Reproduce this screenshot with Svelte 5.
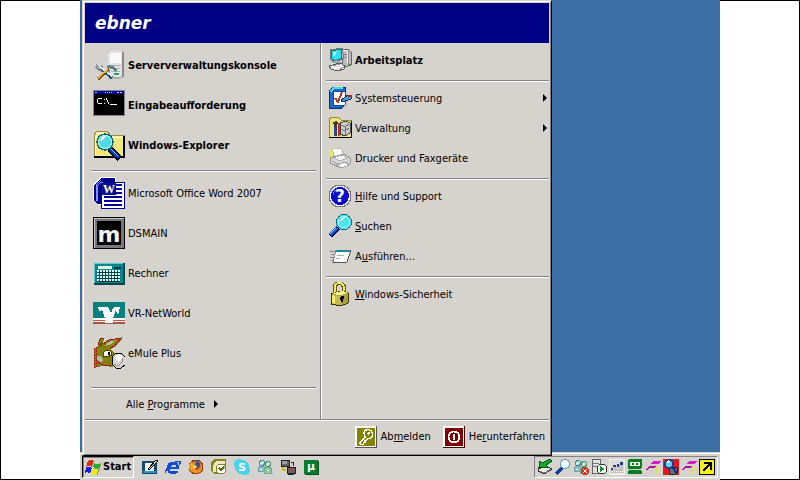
<script lang="ts">
    type Entry = { icon: string; label: string; key?: number; sub?: boolean };

    const pinned: Entry[] = [
        { icon: 'server', label: 'Serververwaltungskonsole' },
        { icon: 'cmd', label: 'Eingabeaufforderung' },
        { icon: 'explorer', label: 'Windows-Explorer' },
    ];

    const recent: Entry[] = [
        { icon: 'word', label: 'Microsoft Office Word 2007' },
        { icon: 'dsmain', label: 'DSMAIN' },
        { icon: 'calc', label: 'Rechner' },
        { icon: 'vr', label: 'VR-NetWorld' },
        { icon: 'emule', label: 'eMule Plus' },
    ];

    // key = index of the underlined letter
    const places: Entry[][] = [
        [{ icon: 'computer', label: 'Arbeitsplatz' }],
        [
            { icon: 'control', label: 'Systemsteuerung', key: 1, sub: true },
            { icon: 'admin', label: 'Verwaltung', sub: true },
            { icon: 'printer', label: 'Drucker und Faxgeräte' },
        ],
        [
            { icon: 'help', label: 'Hilfe und Support', key: 0 },
            { icon: 'search', label: 'Suchen', key: 0 },
            { icon: 'run', label: 'Ausführen...', key: 1 },
        ],
        [{ icon: 'lock', label: 'Windows-Sicherheit', key: 0 }],
    ];

    const quick = [
        ['desktop', 'Desktop anzeigen'],
        ['ie', 'Internet Explorer'],
        ['firefox', 'Firefox'],
        ['outlook', 'Outlook'],
        ['skype', 'Skype'],
        ['messenger', 'Messenger'],
        ['remote', 'Remotedesktop'],
        ['utorrent', 'µTorrent'],
    ];

    const tray = [
        ['eject', 'Hardware entfernen'],
        ['magnifier', 'Suche'],
        ['offline', 'Messenger offline'],
        ['service', 'Dienste'],
        ['monitor', 'Monitor'],
        ['robot', 'RoboForm'],
        ['unknown', 'Verbindung 1'],
        ['scan', 'Scanner'],
        ['unknown', 'Verbindung 2'],
        ['arrow', 'Fernsteuerung'],
    ];

    let open = $state(true);
</script>

{#snippet text(label: string, key?: number)}
    {#if key === undefined}
        <span>{label}</span>
    {:else}
        <span>{label.slice(0, key)}<u>{label[key]}</u>{label.slice(key + 1)}</span>
    {/if}
{/snippet}

{#snippet lens()}
    <path d="M17 20l10 10" stroke="#000" stroke-width="6" />
    <path d="M17 20l9 9" stroke="#0a2fd0" stroke-width="4" />
    <path d="M17 19l8 8" stroke="#8cd8f8" stroke-width="1" />
    <circle cx="12" cy="13" r="8" fill="#4fd8e8" stroke="#08647c" stroke-width="1.5" />
    <circle cx="12" cy="13" r="6.5" fill="none" stroke="#a8f4fa" />
    <path d="M7 12q1-5 6-5l-3 4z" fill="#fff" />
{/snippet}

{#snippet people()}
    <circle cx="5" cy="4" r="2.5" fill="#b9dce4" stroke="#4b8794" />
    <path d="M1 12q0-5 4-5t4 5z" fill="#86bfce" stroke="#6fa5b2" />
    <circle cx="11" cy="5" r="2.5" fill="#b9e0c6" stroke="#4f9172" />
    <path d="M7 14q0-6 4-6t4 6z" fill="#8cc9a4" stroke="#6fae8c" />
    <path d="M3 4h2M10 5h1M3 10h2M10 11h2" stroke="#fff" />
{/snippet}

{#snippet icon32(name: string)}
    <svg class="icon" viewBox="0 0 32 32" fill="none" aria-hidden="true">
        {#if name === 'server'}
            <path d="M15 5l4-3h11v25l-4 3H15z" fill="#adadad" />
            <path d="M15 5l4-3h10v24l-3 3H15z" fill="#e4e4e2" />
            <path d="M17 4h11v10H17z" fill="#fafafa" />
            <path d="M29 3v25h2V3z" fill="#8c8c8c" />
            <path d="M17 16h11M18 19h9M18 22h9M18 28h12" stroke="#a8b0b0" />
            <path d="M21 25h5" stroke="#28a05a" stroke-width="2" />
            <path d="M3 17l4 4 10 3" stroke="#a0a4a6" stroke-width="3" />
            <path d="M3 15v4l4 2 3-2-2-3" stroke="#888" />
            <path d="M7 19l12 10" stroke="#214f70" stroke-width="3" />
            <path d="M7 18l12 9" stroke="#def" stroke-width="2" />
            <path d="M15 16l6 1 3 4-2 2-3-3-5-1z" fill="#5f8189" />
            <path d="M16 20L5 30" stroke="#7c4b12" stroke-width="3" />
            <path d="M15 20L5 29" stroke="#e8b04c" stroke-width="2" />
        {:else if name === 'cmd'}
            <path d="M0 1h32v26H0z" fill="#848484" />
            <path d="M1 2h30v24H1z" fill="#000" />
            <path d="M1 2h30v3H1z" fill="#0000a0" />
            <path d="M2 3h2v1H2zM12 3h1v1h-1zM14 3h1v1h-1zM16 3h1v1h-1zM18 3h1v1h-1zM24 3h2v1h-2zM27 3h2v1h-2z" fill="#c8d0ff" />
            <path d="M5 9h4v1H5zM4 10h1v4H4zM5 14h4v1H5zM11 10h1v1h-1zM11 14h1v1h-1zM13 9h1v2h-1zM14 11h1v2h-1zM15 13h1v2h-1zM17 15h7v1h-7z" fill="#fff" />
        {:else if name === 'explorer'}
            <path d="M1 27V6l3-4h10l3 4h14v21z" fill="#f7ef94" stroke="#9c8c40" />
            <path d="M2 8h28v18H2z" fill="#efe878" />
            <path d="M2 8h28M2 8v18M4 4h9" stroke="#fffbd0" />
            <path d="M1 28h30V7" stroke="#000" stroke-width="2" />
            {@render lens()}
        {:else if name === 'word'}
            <path d="M7 0h16v5H11v23H4l-4-4V8z" fill="#fff" />
            <path d="M8 1h14v4H10v22H4l-3-3V8z" fill="#00008c" />
            <path d="M8 3L3 8v15h1V9l4-4h8" stroke="#8890ff" />
            <path d="M10 5h21v26H8V13h2z" fill="#fff" stroke="#0000a0" />
            <path d="M9 6h14v12H9z" fill="#10108c" />
            <text x="10" y="16" font-family="Liberation Serif, serif" font-size="12" font-weight="bold" fill="#fff">W</text>
            <path d="M23 8h6M23 12h6M23 16h6M11 20h18M11 24h18M11 28h18" stroke="#0000a0" stroke-width="2" />
        {:else if name === 'dsmain'}
            <path d="M0 0h32v32H0z" fill="#000" />
            <path d="M1 1h30v30H1z" fill="#787878" />
            <path d="M1 31V1h30v1H2v29z" fill="#c6c6c6" />
            <path d="M4 4h24v24H4z" fill="#000" />
            <text x="16" y="25" text-anchor="middle" font-family="DejaVu Sans, sans-serif" font-size="22" font-weight="bold" fill="#f4f4f4">m</text>
        {:else if name === 'calc'}
            <path d="M1 6h31v22H1z" fill="#004448" />
            <path d="M1 6h29v20H1z" fill="#63cbd0" />
            <path d="M2 7h28v19H2z" fill="#008890" />
            <path d="M5 9h14v3H5z" fill="#e8f4d8" />
            <path d="M21 11h7M5 15h22M5 18h22M5 21h22M5 24h22" stroke="#003c44" stroke-width="2" />
            <path d="M4 14h23M4 17h23M4 20h23M4 23h23" stroke="#e8ffff" stroke-width="2" stroke-dasharray="2 1" />
        {:else if name === 'vr'}
            <path d="M0 5h32v16H0z" fill="#088080" />
            <path d="M0 21h32v2H0z" fill="#fff" />
            <path d="M0 23h32v1H0z" fill="#e04848" />
            <path d="M0 24h32v1H0z" fill="#fff" />
            <path d="M0 25h32v2H0z" fill="#9b5b3c" />
            <path d="M5 10h10l3 6 2-5 2-1h5l-1 5-2 2-1-4-3 9v4h-8v-5l-3-8-3 1z" fill="#fff" />
        {:else if name === 'emule'}
            <path d="M1 31V13l4-5 1-5 4-2 1 1-1 5 6-4 12-2 1 1-6 7-5 3 4 5 1 12-6 1-4-2-8 2z" fill="#848008" />
            <path d="M5 8l2-6 4-1M10 7l6-4 12-2-6 8-5 2" stroke="#a01818" />
            <path d="M7 10l2-5M12 9l5-4" stroke="#565400" stroke-width="2" />
            <path d="M13 7l5-3 5-1-5 4-6 2z" fill="#c0bcae" />
            <path d="M1 11v20M3 10v20" stroke="#a01818" stroke-dasharray="2 1" />
            <path d="M4 19q5-1 6 4-3 4-6 0z" fill="#bab7ad" />
            <path d="M11 15q4-4 7 0l1 3-5 2-4-1z" fill="#fff" stroke="#4a4208" />
            <path d="M15 15h2v3h-2z" fill="#000" />
            <path d="M19 20l4-4h5l4 4v8l-4 3h-5l-4-4z" fill="#d8d4d4" stroke="#000" />
            <path d="M22 19l4-2 4 2-2 4-3 2z" fill="#fff" />
            <path d="M21 27l4 2 4-4 1-4" stroke="#8c888c" />
            <path d="M5 24q3 6 13 4" stroke="#a01818" />
        {/if}
    </svg>
{/snippet}

{#snippet icon24(name: string)}
    <svg class="icon" viewBox="0 0 24 24" fill="none" aria-hidden="true">
        {#if name === 'computer'}
            <path d="M14 1l7 1 2 2v13l-6 2-3-2z" fill="#bdbdbd" stroke="#666" />
            <path d="M20 3v14M16 6h5M16 9h5" stroke="#888" />
            <path d="M15 2l4 1v12" stroke="#fff" />
            <path d="M2 2l12-2 2 10-9 5-5-4z" fill="#ccc" stroke="#777" />
            <path d="M3 3l10-2 1 9-7 3-3-2z" fill="#31dff0" stroke="#0b7888" />
            <path d="M5 5l4-2-3 6z" fill="#bdf8fc" />
            <path d="M7 14l5-1 3 4-4 1z" fill="#aaa" />
            <path d="M1 18l11-3 5 3-1 3-7 2-6-2z" fill="#e8e8e8" stroke="#555" />
            <path d="M4 18l8-2M12 21l4-2" stroke="#999" />
            <path d="M21 16h2" stroke="#1cba38" />
        {:else if name === 'control'}
            <path d="M1 5l4-4h12v18l-3 3-13 1z" fill="#1f68c8" stroke="#063275" />
            <path d="M2 6l4-4h9" stroke="#4cd8f0" stroke-width="2" />
            <path d="M5 5h10l2 1v13L5 20z" fill="#fff" stroke="#0a4ca8" />
            <path d="M7 12l3 4 4-10" stroke="#b43820" stroke-width="2" />
            <path d="M13 14l7-5 4 1-1 3-9 3z" fill="#4c9cd8" stroke="#102e68" />
            <path d="M20 10h4" stroke="#c02020" stroke-width="2" />
        {:else if name === 'admin'}
            <path d="M1 21V4l2-3h7l3 3h10v17z" fill="#eee47c" stroke="#948634" />
            <path d="M1 21h22V5" stroke="#000" />
            <path d="M5 6l3-1 3 2-2 1v12H6V9z" fill="#374040" />
            <path d="M7 11v9" stroke="#2048c0" stroke-width="2" />
            <path d="M11 7v13" stroke="#c82828" stroke-width="2" />
            <path d="M12 7l6-2 4 2v10l-5 3-5-2z" fill="#c9c9c9" stroke="#444" />
            <path d="M13 9l4 2 4-3M13 13l4 2 4-3M17 11v8" stroke="#777" />
        {:else if name === 'printer'}
            <path d="M1 4l5-3 6 1-1 9-8 4-2-1z" fill="#eee36b" />
            <path d="M4 2h9l4 9-10 2z" fill="#fff" stroke="#bbb" />
            <path d="M2 12l14-4 6 4v6l-9 4-11-5z" fill="#d6d6d6" stroke="#959595" />
            <path d="M5 12l9-3 5 3-7 3z" fill="#f4f4f4" stroke="#b0b0b0" />
            <path d="M4 15l8 4 8-3M8 19l9-3 4 3-7 3z" stroke="#a4a4a4" />
            <path d="M10 19l7-2 3 2-6 2z" fill="#fff" />
        {:else if name === 'help'}
            <circle cx="12" cy="12" r="11" fill="#f4f4ff" stroke="#777" />
            <circle cx="12" cy="12" r="9" fill="#0a0ac8" />
            <path d="M5 11a7 7 0 0 1 5-6" stroke="#5c70ff" />
            <text x="12" y="18" text-anchor="middle" font-family="DejaVu Sans, sans-serif" font-size="17" font-weight="bold" fill="#fff">?</text>
        {:else if name === 'search'}
            <path d="M10 14l-8 8" stroke="#001050" stroke-width="5" />
            <path d="M9 14l-7 7" stroke="#1850e0" stroke-width="3" />
            <path d="M8 14l-6 6" stroke="#a4e0ff" />
            <circle cx="16" cy="8" r="7.5" fill="#4ce4f0" stroke="#08748a" />
            <circle cx="16" cy="8" r="6" stroke="#9ef4f8" />
            <path d="M12 7q1-4 5-4l-2 3z" fill="#fff" />
        {:else if name === 'run'}
            <path d="M2 7h6M3 10h5M2 13h5M3 16h3" stroke="#888" />
            <path d="M8 6h15l-4 12H5z" fill="#fafafa" stroke="#888" />
            <path d="M8 7h15" stroke="#168c9c" stroke-width="2" />
            <path d="M5 18h14l4-12" stroke="#555" />
            <path d="M9 11h7M8 14h4" stroke="#aaa" />
        {:else if name === 'lock'}
            <path d="M7 11V5q0-4 4-4t5 4v5" stroke="#5c5600" stroke-width="4" />
            <path d="M7 11V5q0-4 4-4t5 4v5" stroke="#f1ec63" stroke-width="2" />
            <path d="M3 12l11-3 6 2v10l-7 3-10-2z" fill="#aaa03c" stroke="#3b3500" />
            <path d="M3 12l10 1 7-2-6-2z" fill="#f8f389" />
            <path d="M4 13l9 1v9l-9-2z" fill="#c4bc50" />
            <path d="M4 13l3 1v8l-3-1z" fill="#f4ef70" />
            <path d="M14 15l5-2v8l-5 2z" fill="#a89f48" />
            <path d="M14 14v6" stroke="#000" stroke-width="2" />
            <circle cx="14" cy="16" r="2" fill="#000" />
        {:else if name === 'logoff'}
            <path d="M0 0h24v24H0z" fill="#555" />
            <path d="M0 0h23v23H0z" fill="#fff" />
            <path d="M2 2h20v20H2z" fill="#848400" />
            <path d="M11 12l-6 6 1 2h3v-2h2v-2l3-2q5 0 5-5t-5-5-4 5z" stroke="#fff" stroke-width="1.5" />
            <circle cx="15" cy="8" r="1.5" fill="#fff" />
        {:else if name === 'shutdown'}
            <path d="M0 0h24v24H0z" fill="#400" />
            <path d="M0 0h23v23H0z" fill="#fff" />
            <path d="M2 2h20v20H2z" fill="#840000" />
            <circle cx="12" cy="12" r="6" stroke="#fff" stroke-width="2" />
            <path d="M12 9v6" stroke="#fff" stroke-width="2" />
        {/if}
    </svg>
{/snippet}

{#snippet icon16(name: string)}
    <svg class="icon" viewBox="0 0 16 16" fill="none" aria-hidden="true">
        {#if name === 'flag'}
            <path d="M3 2q3-2 6 0L7 8Q4 6 1 7z" fill="#e22810" />
            <path d="M9 4q3 2 7 0l-2 5q-3 2-6-1z" fill="#1db02c" />
            <path d="M1 8q3-1 6 1l-2 6q-2-3-5-1z" fill="#1020e0" />
            <path d="M8 9q3 3 6 1l-2 5q-3 2-6-1z" fill="#f2e800" />
            <path d="M16 5l-4 11" stroke="#8a9a38" />
        {:else if name === 'desktop'}
            <path d="M0 2h15v13H0z" fill="#16486e" />
            <path d="M3 4h9v8H3z" fill="#f0fbff" />
            <path d="M1 13h13" stroke="#2898c8" stroke-width="2" />
            <path d="M6 10l8-9 2 1-8 8-2 1z" fill="#f4d46c" stroke="#000" />
        {:else if name === 'ie'}
            <circle cx="8" cy="9" r="5" stroke="#124cd4" stroke-width="3" />
            <path d="M4 9h9" stroke="#124cd4" stroke-width="2" />
            <path d="M10 11h5" stroke="#d6d3ce" stroke-width="2" />
            <path d="M1 14q-2-2 4-7 7-6 10-4 1 1-1 3" stroke="#124cd4" stroke-width="1.5" />
        {:else if name === 'firefox'}
            <circle cx="8" cy="8" r="7" fill="#e37418" stroke="#94380b" />
            <circle cx="8" cy="6" r="4" fill="#2854a8" />
            <path d="M2 3l3 1 3-2-1 4 3 2-4 2 3 2 4-2 1-5q2 8-6 9-7-1-7-6z" fill="#f09a24" />
            <path d="M3 5l2 2 3 1-3 2" stroke="#ffdc68" />
        {:else if name === 'outlook'}
            <path d="M3 0h12v5l-2 10H3l-3-3V4z" fill="#858420" />
            <path d="M4 2h10v3H7L5 8v5H2V5z" fill="#f0e8b8" />
            <path d="M1 6l4-5" stroke="#858420" stroke-width="2" />
            <circle cx="10" cy="10" r="5" fill="#fff" stroke="#858420" />
            <path d="M8 9l2 2 3-3" stroke="#646418" stroke-width="1.5" />
        {:else if name === 'skype'}
            <circle cx="5" cy="5" r="5" fill="#48d4ef" />
            <circle cx="11" cy="11" r="5" fill="#48d4ef" />
            <circle cx="8" cy="8" r="7" fill="#48d4ef" />
            <text x="8" y="12" text-anchor="middle" font-family="DejaVu Sans, sans-serif" font-size="11" font-weight="bold" fill="#fff">S</text>
        {:else if name === 'messenger'}
            {@render people()}
        {:else if name === 'remote'}
            <path d="M1 1h8v6H1zM7 8h8v6H7z" fill="#60666c" stroke="#222" />
            <path d="M2 2h5v3H2z" fill="#9d9da5" />
            <path d="M9 9h4v3H9z" fill="#a44a3c" />
            <path d="M3 8v3h3" stroke="#d8b800" stroke-width="2" />
            <path d="M11 3h2v4M8 15h6" stroke="#222" />
        {:else if name === 'utorrent'}
            <path d="M1 1h14v14H1z" fill="#087c30" />
            <path d="M15 2v13H2" stroke="#004c18" />
            <text x="8" y="11" text-anchor="middle" font-family="DejaVu Sans, sans-serif" font-size="11" font-weight="bold" fill="#fff">µ</text>
        {:else if name === 'eject'}
            <path d="M1 10l8-3 6 3-8 5-6-3z" fill="#ececec" stroke="#333" />
            <path d="M3 12l4 2 7-4" stroke="#888" />
            <path d="M13 0l2 2-6 4 2 2H2l1-6 2 2z" fill="#18a830" stroke="#045c12" />
        {:else if name === 'magnifier'}
            <path d="M7 9l-6 6" stroke="#124090" stroke-width="3" />
            <circle cx="10" cy="5" r="4.5" fill="#e8fcff" stroke="#6a9ab0" />
            <path d="M8 3h3" stroke="#fff" stroke-width="2" />
        {:else if name === 'offline'}
            {@render people()}
            <circle cx="12" cy="12" r="4" fill="#d4341c" />
            <path d="M10 10l4 4M14 10l-4 4" stroke="#fff" />
        {:else if name === 'service'}
            <path d="M1 1l2-1h6v14H1z" fill="#e0e0e0" stroke="#666" />
            <path d="M2 4h6M2 7h6" stroke="#777" />
            <circle cx="11" cy="10" r="5" fill="#fff" stroke="#333" />
            <path d="M9 7l5 3-5 3z" fill="#0c9428" />
        {:else if name === 'monitor'}
            <path d="M0 0h16v16H0z" fill="#f4f2f0" />
            <path d="M1 1h14v14H1z" fill="#dedcd8" />
            <path d="M2 14v-3h3V8h3v2h2V6h4v8z" fill="#c0bfbb" />
            <path d="M2 9h2v2H2zM4 6h3v2H4zM8 5h2v3H8zM11 3h3v3h-3z" fill="#203c9c" />
            <path d="M3 12h11M3 14h11" stroke="#fff" stroke-dasharray="1 1" />
        {:else if name === 'robot'}
            <rect x="1" y="0" width="14" height="10" rx="2" fill="#087c20" />
            <path d="M3 3h10v4H3z" fill="#e8fbe8" />
            <path d="M5 4h2v2H5zM9 4h2v2H9z" fill="#087c20" />
            <path d="M1 15v-3l2-1h10l2 1v3z" fill="#087c20" />
        {:else if name === 'unknown'}
            <path d="M5 5l3-3h8l-3 3z" fill="#d818d0" />
            <path d="M0 11l4-4h8l-3 2H5l-3 2z" fill="#b00ca8" />
            <text x="12" y="15" text-anchor="middle" font-family="DejaVu Sans, sans-serif" font-size="9" font-weight="bold" fill="#eee428">?</text>
        {:else if name === 'scan'}
            <path d="M0 0h16v16H0z" fill="#e41820" />
            <path d="M6 8h8v6l-2 1H6z" fill="#606a78" stroke="#222" />
            <circle cx="6" cy="5" r="4" fill="#64d2ec" stroke="#113c98" stroke-width="2" />
            <path d="M9 8l5 6" stroke="#102c80" stroke-width="2" />
            <path d="M4 4l2-2" stroke="#fff" stroke-width="1.5" />
        {:else if name === 'arrow'}
            <path d="M0 0h16v16H0z" fill="#000" />
            <path d="M1 1h14v14H1z" fill="#f8ee18" />
            <path d="M4 12l7-7M5 4h7v7" stroke="#000" stroke-width="2" />
        {/if}
    </svg>
{/snippet}

{#snippet entry(e: Entry, bold: boolean)}
    <li>
        <button class="entry" class:bold>
            {#if pinned.includes(e) || recent.includes(e)}
                {@render icon32(e.icon)}
            {:else}
                {@render icon24(e.icon)}
            {/if}
            {@render text(e.label, e.key)}
            {#if e.sub}
                <i class="caret"></i>
            {/if}
        </button>
    </li>
{/snippet}

<div class="page">
    <main class="desktop">
        {#if open}
            <nav class="menu" aria-label="Startmenü">
                <h1>ebner</h1>
                <div class="columns">
                    <div class="programs">
                        <ul>
                            {#each pinned as e}{@render entry(e, true)}{/each}
                        </ul>
                        <hr />
                        <ul>
                            {#each recent as e}{@render entry(e, false)}{/each}
                        </ul>
                        <hr class="last" />
                        <button class="all">
                            {@render text('Alle Programme', 5)}
                            <i class="caret"></i>
                        </button>
                    </div>
                    <div class="places">
                        {#each places as group, i}
                            {#if i > 0}<hr />{/if}
                            <ul>
                                {#each group as e}{@render entry(e, i === 0)}{/each}
                            </ul>
                        {/each}
                    </div>
                </div>
                <footer>
                    <button class="session">{@render icon24('logoff')}{@render text('Abmelden', 2)}</button>
                    <button class="session">{@render icon24('shutdown')}{@render text('Herunterfahren', 2)}</button>
                </footer>
            </nav>
        {/if}

        <div class="taskbar">
            <button class="start" class:pressed={open} onclick={() => (open = !open)}>
                {@render icon16('flag')}
                <span>Start</span>
            </button>
            <div class="quick">
                {#each quick as [name, label]}
                    <button aria-label={label}>{@render icon16(name)}</button>
                {/each}
            </div>
            <div class="tray">
                {#each tray as [name, label]}
                    <button aria-label={label}>{@render icon16(name)}</button>
                {/each}
            </div>
        </div>
    </main>
</div>

<style>
    :global(body) {
        background: #fff;
    }

    .page {
        min-height: 100vh;
        display: flex;
        justify-content: center;
        box-shadow: inset 0 0 0 1px #000;
        font-family: Tahoma, "DejaVu Sans Condensed", "DejaVu Sans", sans-serif;
        font-size: 11px;
        line-height: 14px;
        color: #000;
    }

    .desktop {
        position: relative;
        width: 80%;
        display: flex;
        flex-direction: column;
        justify-content: flex-end;
        background: #3a6ea5;
    }

    button {
        display: flex;
        align-items: center;
        margin: 0;
        padding: 0;
        border: 0;
        background: none;
        font: inherit;
        color: inherit;
        text-align: left;
        white-space: nowrap;
    }

    ul {
        list-style: none;
        margin: 0;
        padding: 0;
    }

    .icon {
        display: block;
        flex: none;
        width: 16px;
        height: 16px;
        shape-rendering: crispEdges;
    }

    /* start menu */
    .menu {
        position: absolute;
        left: 2px;
        bottom: 24px;
        z-index: 1;
        box-sizing: border-box;
        width: min(470px, 100%);
        padding: 1px;
        background: #d6d3ce;
        border: 1px solid;
        border-color: #d6d3ce #000 #000 #d6d3ce;
        box-shadow: inset 1px 1px #fff, inset -1px -1px #848284;
    }

    h1 {
        margin: 1px 1px 0;
        padding: 0 10px;
        background: #000084;
        color: #fff;
        font: italic bold 17px/40px Verdana, "DejaVu Sans", sans-serif;
    }

    .columns {
        display: grid;
        grid-template-columns: 236px 1fr;
        margin: 0 1px;
    }

    .programs {
        padding: 2px 4px 0 6px;
        border-right: 1px solid #848284;
        box-shadow: 1px 0 #fff;
    }

    .places {
        padding: 2px 0 0 5px;
    }

    hr {
        margin: 5px 0 1px;
        border: 0;
        border-top: 1px solid #848284;
        border-bottom: 1px solid #fff;
    }

    hr.last {
        margin: 14px 0 0;
    }

    .entry {
        width: 100%;
        height: 30px;
        gap: 3px;
        padding: 0 2px;
    }

    .entry .icon {
        width: 24px;
        height: 24px;
    }

    .programs .entry {
        height: 40px;
    }

    .programs .icon {
        width: 32px;
        height: 32px;
    }

    .columns span {
        padding-top: 2px;
    }

    .bold {
        font-weight: bold;
    }

    .caret {
        border: 4px solid transparent;
        border-left-color: #000;
        border-right: 0;
    }

    .entry .caret {
        margin-left: auto;
    }

    .all {
        height: 30px;
        gap: 9px;
        padding-left: 35px;
    }

    footer {
        display: flex;
        justify-content: flex-end;
        gap: 12px;
        height: 34px;
        margin: 0 1px;
        padding-right: 4px;
        border-top: 1px solid #848284;
        box-shadow: inset 0 1px #fff;
    }

    .session {
        gap: 4px;
    }

    .session .icon {
        width: 22px;
        height: 22px;
    }

    /* taskbar */
    .taskbar {
        display: flex;
        align-items: center;
        height: 26px;
        padding: 1px 2px 0;
        background: #d6d3ce;
        border-top: 1px solid #d6d3ce;
        box-shadow: inset 0 1px #fff;
    }

    .start {
        box-sizing: border-box;
        height: 22px;
        gap: 2px;
        padding: 0 2px;
        border: 1px solid;
        border-color: #fff #000 #000 #fff;
        font-weight: bold;
    }

    .start.pressed {
        border-color: #000 #fff #fff #000;
        box-shadow: inset 1px 1px #848284;
    }

    .quick {
        display: flex;
        gap: 7px;
        padding-left: 8px;
    }

    .tray {
        display: flex;
        gap: 2px;
        margin-left: auto;
        padding: 2px;
        border: 1px solid;
        border-color: #848284 #fff #fff #848284;
    }
</style>
